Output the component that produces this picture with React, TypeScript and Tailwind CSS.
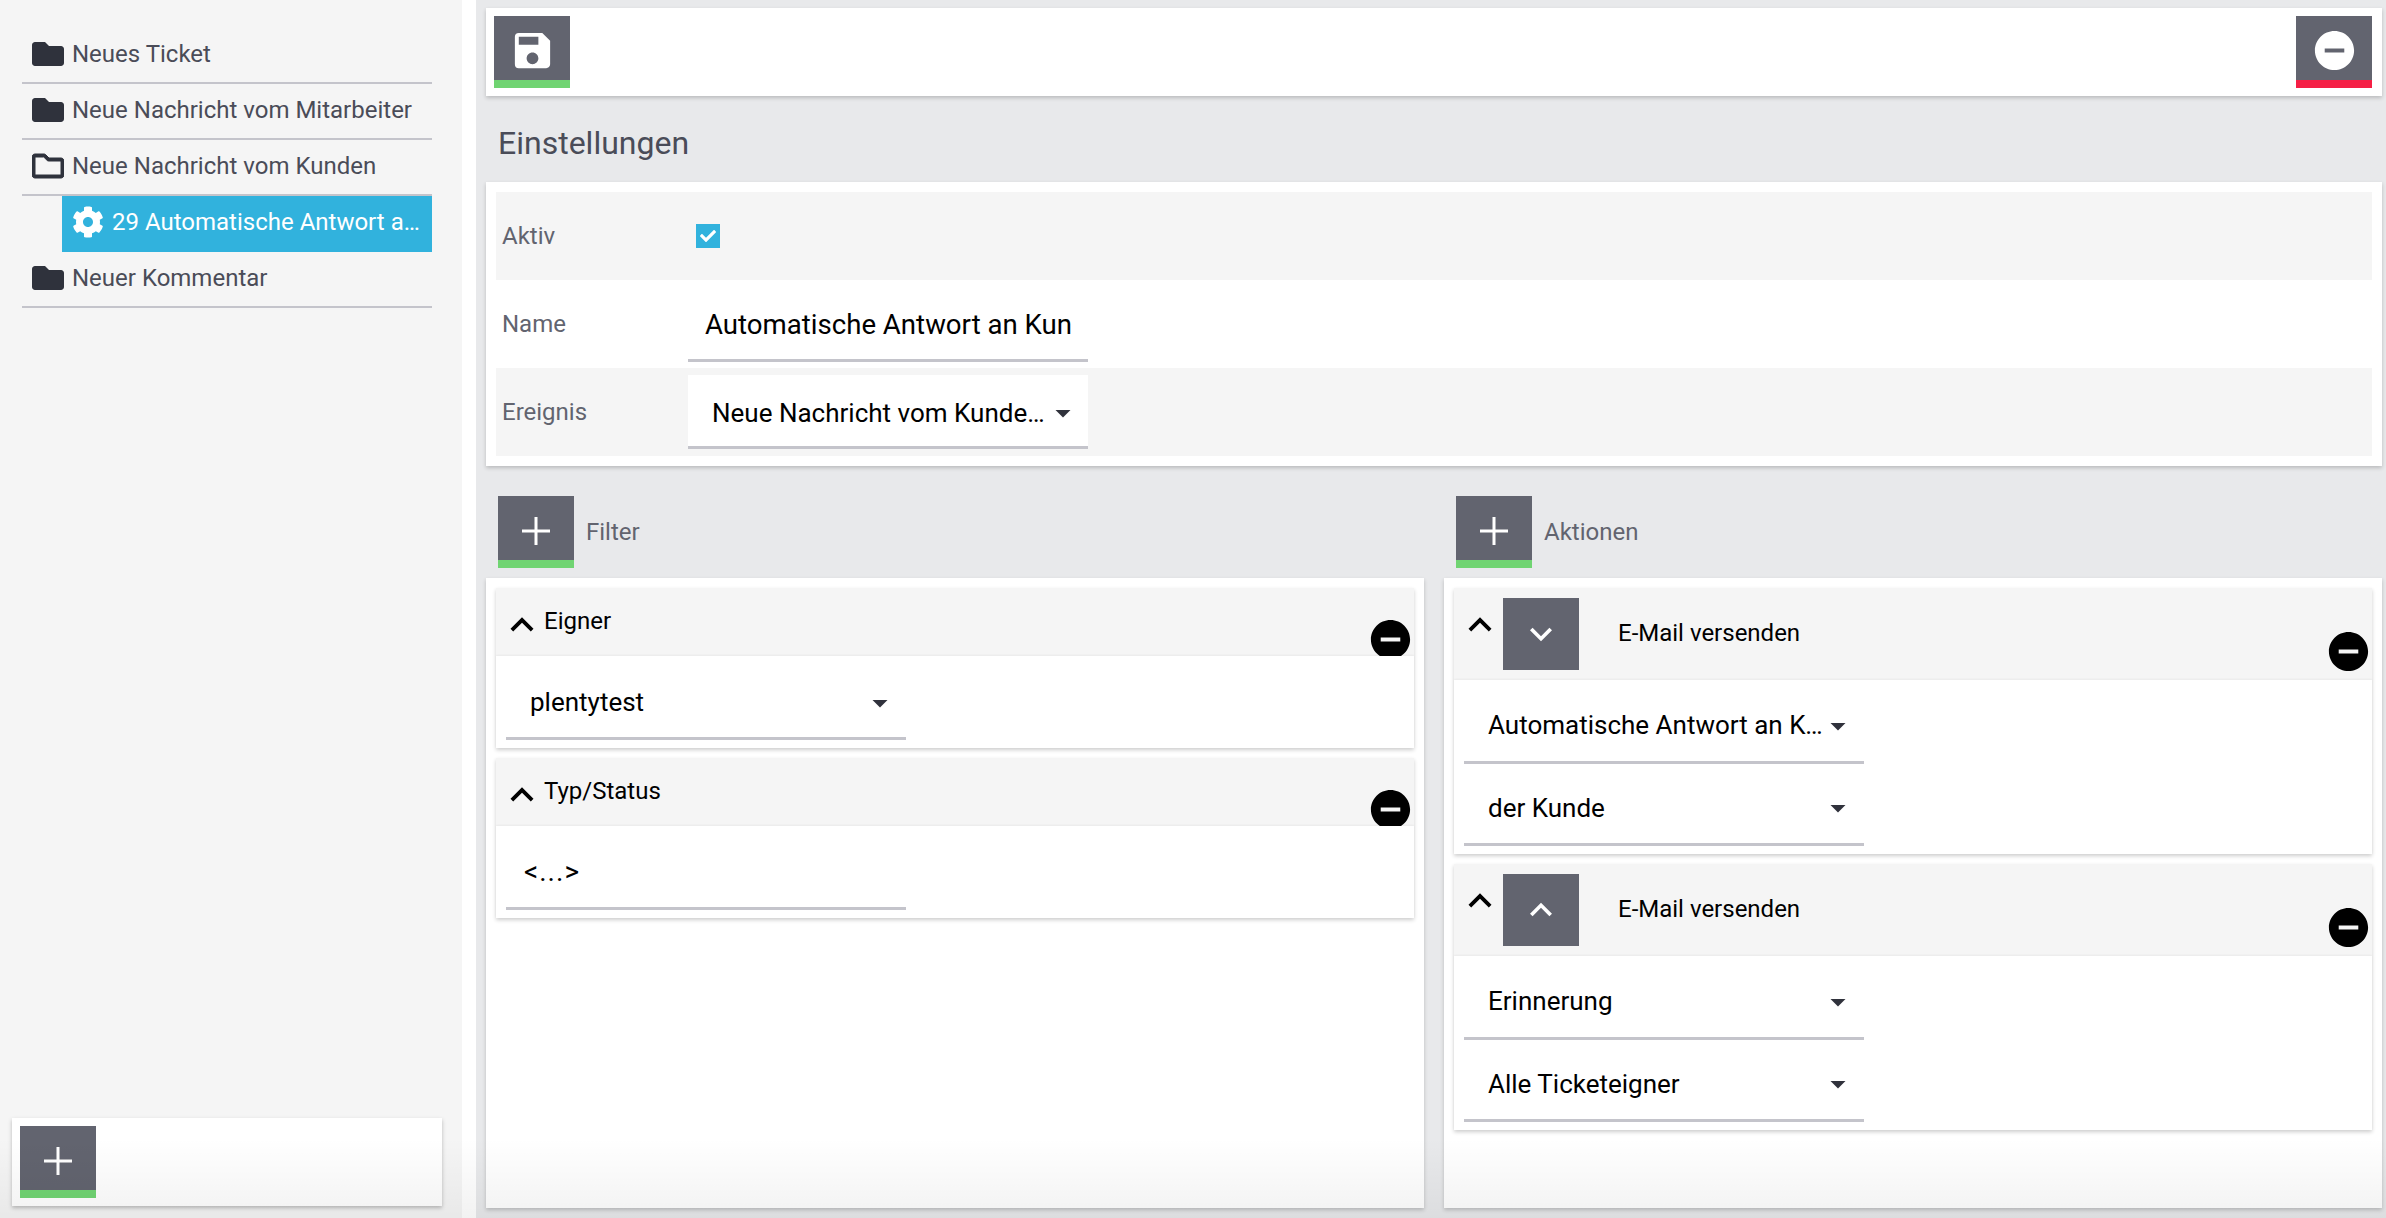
import React from "react";
import {
  MdArrowDropDown,
  MdKeyboardArrowDown,
  MdKeyboardArrowUp,
  MdRemoveCircle,
  MdSave,
} from "react-icons/md";
import { FaCheck, FaCog, FaFolder, FaRegFolder } from "react-icons/fa";

const PlusIcon = () => (
  <svg width="28" height="28" viewBox="0 0 28 28" className="mt-[6px]" fill="white">
    <rect x="12.5" y="0" width="3" height="28" />
    <rect x="0" y="12.5" width="28" height="3" />
  </svg>
);

const ActionButton = ({ children, bar = "green" }: { children: React.ReactNode; bar?: "green" | "red" }) => (
  <div
    className={`flex h-[72px] w-[76px] shrink-0 items-center justify-center border-b-8 bg-[#62646f] text-white ${
      bar === "green" ? "border-[#70d472]" : "border-[#f51f45]"
    }`}
  >
    {children}
  </div>
);

const TreeRow = ({ label, open = false }: { label: string; open?: boolean }) => (
  <div className="flex h-14 items-center gap-[8px] border-b-2 border-[#c4c4cb] pl-[10px] pb-[2px]">
    {open ? (
      <FaRegFolder className="h-[32px] w-[32px] stroke-current stroke-[16px] text-[#2f323c]" />
    ) : (
      <FaFolder className="h-[32px] w-[32px] text-[#2f323c]" />
    )}
    <span className="text-[24px] text-[#4a4c58]">{label}</span>
  </div>
);

const Sidebar = () => (
  <aside className="flex w-[462px] shrink-0 flex-col justify-between bg-[#f5f5f5] pt-[28px] pr-[30px] pb-[12px] pl-[22px]">
    <nav>
      <TreeRow label="Neues Ticket" />
      <TreeRow label="Neue Nachricht vom Mitarbeiter" />
      <TreeRow label="Neue Nachricht vom Kunden" open />
      <div className="ml-[40px] flex h-[56px] items-center gap-[8px] bg-[#31b2dd] pr-[6px] pb-[4px] pl-[10px] text-white">
        <FaCog className="h-[32px] w-[32px] shrink-0" />
        <span className="truncate text-[24px]">29 Automatische Antwort an Kunden</span>
      </div>
      <TreeRow label="Neuer Kommentar" />
    </nav>
    <div className="-mr-[10px] -ml-[10px] flex h-[88px] items-center bg-white pl-2 shadow-[0_2px_4px_rgba(0,0,0,0.25)]">
      <ActionButton>
        <PlusIcon />
      </ActionButton>
    </div>
  </aside>
);

const Select = ({ value, className = "" }: { value: string; className?: string }) => (
  <div className={`flex w-[400px] items-center border-b-[3px] border-[#c4c4cb] pr-[16px] pl-[24px] ${className}`}>
    <span className="min-w-0 flex-1 truncate text-[26px] text-black">{value}</span>
    <MdArrowDropDown size={36} className="-mr-[8px] -ml-[8px] shrink-0 text-[#30323c]" />
  </div>
);

const Group = ({ title, children }: { title: string; children: React.ReactNode }) => (
  <section className="shadow-[0_2px_4px_rgba(0,0,0,0.2)]">
    <header className="relative flex h-[68px] items-start bg-[#f5f5f5] pt-[14px] pl-[3px]">
      <MdKeyboardArrowUp size={46} className="shrink-0 text-black" />
      <span className="mt-[1px] -ml-[1px] text-[24px] text-black">{title}</span>
      <MdRemoveCircle size={47} className="absolute top-[28px] right-0 text-black" />
    </header>
    <div className="relative z-10 bg-white px-[10px] shadow-[0_-1px_2px_rgba(0,0,0,0.05)]">{children}</div>
  </section>
);

const ActionGroup = ({ up = false, first, second }: { up?: boolean; first: string; second: string }) => (
  <section className="shadow-[0_2px_4px_rgba(0,0,0,0.2)]">
    <header className="relative flex h-[92px] items-start bg-[#f5f5f5] pt-[10px] pl-[3px]">
      <MdKeyboardArrowUp size={46} className="mt-[4px] shrink-0 text-black" />
      <div className="flex h-[72px] w-[76px] shrink-0 items-center justify-center bg-[#62646f] text-white">
        {up ? <MdKeyboardArrowUp size={44} /> : <MdKeyboardArrowDown size={44} />}
      </div>
      <span className="mt-[17px] ml-[39px] text-[24px] text-black">E-Mail versenden</span>
      <MdRemoveCircle size={47} className="absolute top-[40px] right-0 text-black" />
    </header>
    <div className="relative z-10 flex flex-col bg-white px-[10px] pb-[8px] shadow-[0_-1px_2px_rgba(0,0,0,0.05)]">
      <Select value={first} className="h-[84px] pt-[10px]" />
      <Select value={second} className="h-[82px] pt-[9px]" />
    </div>
  </section>
);

const SettingRow = ({ label, grey = false, children }: { label: string; grey?: boolean; children: React.ReactNode }) => (
  <div className={`flex h-[88px] items-center ${grey ? "bg-[#f5f5f5]" : "bg-white"}`}>
    <span className="w-[192px] shrink-0 pl-[6px] text-[24px] text-[#62646f]">{label}</span>
    {children}
  </div>
);

export default function App() {
  return (
    <div className="relative flex h-[1218px] w-full overflow-hidden bg-white font-['Roboto',sans-serif]">
      <Sidebar />
      <div className="w-[14px] shrink-0 bg-white" />
      <main className="flex min-w-0 flex-1 flex-col bg-[#e8e9eb] pt-[8px] pr-[4px] pb-[10px] pl-[10px]">
        <div className="flex h-[88px] shrink-0 items-center justify-between bg-white px-[8px] pr-[10px] shadow-[0_2px_4px_rgba(0,0,0,0.2)]">
          <ActionButton>
            <MdSave size={47} className="mt-[4px]" />
          </ActionButton>
          <ActionButton bar="red">
            <MdRemoveCircle size={47} className="mt-[4px]" />
          </ActionButton>
        </div>

        <h2 className="flex h-[86px] shrink-0 items-center pt-[8px] pl-[12px] text-[32px] font-normal text-[#4a4c58]">Einstellungen</h2>

        <div className="shrink-0 bg-white p-[10px] shadow-[0_2px_4px_rgba(0,0,0,0.2)]">
          <SettingRow label="Aktiv" grey>
            <div className="ml-[8px] flex h-6 w-6 items-center justify-center bg-[#31b2dd] text-white">
              <FaCheck size={16} />
            </div>
          </SettingRow>
          <SettingRow label="Name">
            <div className="mt-[2px] flex h-[74px] w-[400px] items-center border-b-[3px] border-[#c4c4cb] pt-[3px] pl-[17px] text-[27.6px] text-black">
              Automatische Antwort an Kun
            </div>
          </SettingRow>
          <SettingRow label="Ereignis" grey>
            <div className="flex h-[74px] w-[400px] items-center justify-between border-b-[3px] border-[#c4c4cb] bg-white pt-[5px] pr-[16px] pl-[24px]">
              <span className="whitespace-nowrap text-[26px] text-black">Neue Nachricht vom Kunde…</span>
              <MdArrowDropDown size={36} className="-mr-[8px] shrink-0 text-[#30323c]" />
            </div>
          </SettingRow>
        </div>

        <div className="grid min-h-0 flex-1 grid-cols-2 gap-[20px]">
          <div className="flex flex-col">
            <div className="flex h-[112px] shrink-0 items-center gap-[12px] pt-[30px] pb-[10px] pl-[12px]">
              <ActionButton>
                <PlusIcon />
              </ActionButton>
              <span className="text-[24px] text-[#62646f]">Filter</span>
            </div>
            <div className="flex flex-1 flex-col gap-[10px] bg-white p-[10px] shadow-[0_2px_4px_rgba(0,0,0,0.2)]">
              <Group title="Eigner">
                <Select value="plentytest" className="h-[84px] pt-[12px]" />
                <div className="h-[8px]" />
              </Group>
              <Group title="Typ/Status">
                <div className="flex h-[84px] w-[400px] items-center border-b-[3px] border-[#c4c4cb] pt-[10px] pl-[18px] text-[28px] tracking-[1px] text-black">
                  {"<...>"}
                </div>
                <div className="h-[8px]" />
              </Group>
            </div>
          </div>
          <div className="flex flex-col">
            <div className="flex h-[112px] shrink-0 items-center gap-[12px] pt-[30px] pb-[10px] pl-[12px]">
              <ActionButton>
                <PlusIcon />
              </ActionButton>
              <span className="text-[24px] text-[#62646f]">Aktionen</span>
            </div>
            <div className="flex flex-1 flex-col gap-[10px] bg-white p-[10px] shadow-[0_2px_4px_rgba(0,0,0,0.2)]">
              <ActionGroup first="Automatische Antwort an Kunden" second="der Kunde" />
              <ActionGroup up first="Erinnerung" second="Alle Ticketeigner" />
            </div>
          </div>
        </div>
      </main>
      {/* leichter Verlauf am unteren Rand */}
      <div className="pointer-events-none absolute inset-x-0 bottom-0 z-20 h-[80px] bg-gradient-to-b from-transparent to-[rgba(0,0,0,0.05)]" />
    </div>
  );
}
